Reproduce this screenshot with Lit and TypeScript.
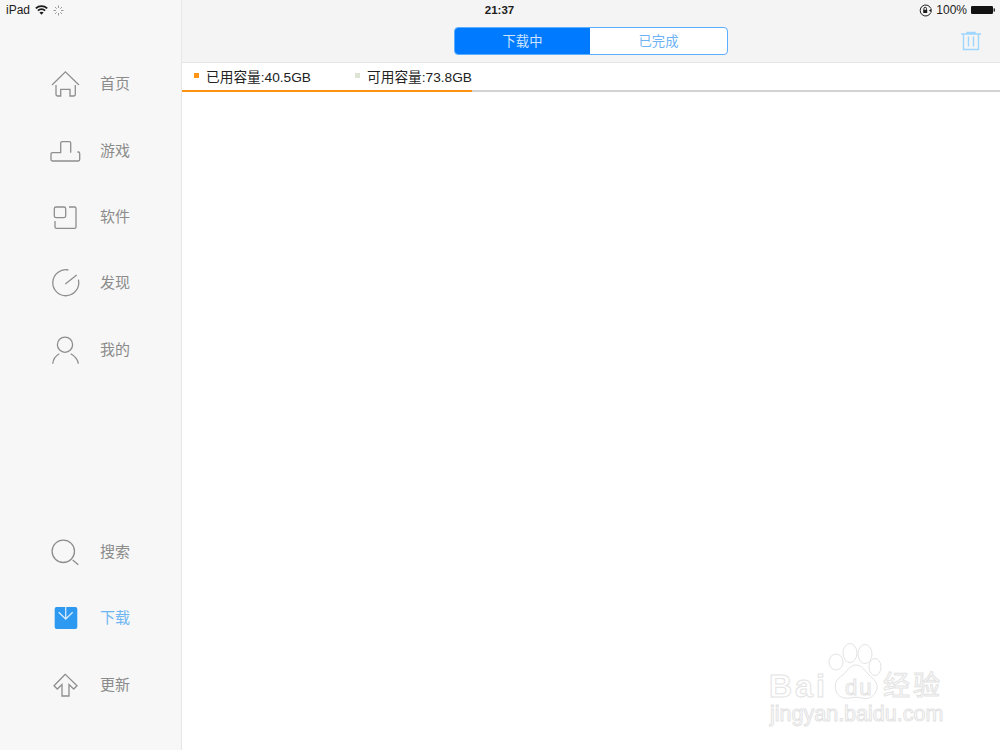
import { LitElement, html, css, svg } from 'lit';
import { customElement, state } from 'lit/decorators.js';

interface NavItem {
  label: string;
  icon: unknown;
  active?: boolean;
}

const homeIcon = svg`<path d="M2 17 15.4 3.8 29 17M6 17V26.6Q6 28 7.4 28H10.7V21.3H20V28H23.9Q25.3 28 25.3 26.6V17"/>`;
const gameIcon = svg`<path d="M20.7 17.7V8.1Q20.7 6.7 19.3 6.7H12.1Q10.7 6.7 10.7 8.1V17.7H2.4Q1 17.7 1 19.1V24.6Q1 26 2.4 26H28.3Q29.7 26 29.7 24.6V18.4Q29.7 17 28.3 17H27.4"/>`;
const appIcon = svg`<rect x="4.3" y="6" width="11.4" height="10.7" rx="1.8"/><path d="M19 6H24.6Q26 6 26 7.4V25.9Q26 27.3 24.6 27.3H6.4Q5 27.3 5 25.9V20"/>`;
const discoverIcon = svg`<path d="M28.4 12.6A13 13 0 1 1 18.4 3M15.3 17 26.7 8"/>`;
const userIcon = svg`<circle cx="15" cy="10.7" r="7.6"/><path d="M2.7 29.7C3.2 25.2 5.7 21.7 9.3 19.7M20.7 19.7C24.3 21.7 27.8 25.2 28.3 29.7"/>`;
const searchIcon = svg`<circle cx="13.3" cy="15.3" r="11.2"/><path d="M22.7 24 28.3 28.7"/>`;
const downloadIcon = svg`<rect class="fill" x="4.7" y="5" width="22.6" height="22" rx="2"/><path class="on-fill" d="M15.7 5V17M8.7 10.3 15.7 17 22.7 10.3"/>`;
const updateIcon = svg`<path d="M15.3 5.3 4 16.7 7.3 20 12 15.5V27H19V15.5L23.7 20 27 16.7Z"/>`;

const topItems: NavItem[] = [
  { label: '首页', icon: homeIcon },
  { label: '游戏', icon: gameIcon },
  { label: '软件', icon: appIcon },
  { label: '发现', icon: discoverIcon },
  { label: '我的', icon: userIcon },
];

const bottomItems: NavItem[] = [
  { label: '搜索', icon: searchIcon },
  { label: '下载', icon: downloadIcon, active: true },
  { label: '更新', icon: updateIcon },
];

@customElement('app-root')
export class AppRoot extends LitElement {
  @state()
  private tab = 0;

  static styles = css`
    :host {
      display: block;
      position: relative;
      width: 1000px;
      height: 750px;
      overflow: hidden;
      background: #fff;
      font-family: 'Liberation Sans', 'Noto Sans CJK SC', sans-serif;
    }

    .layout {
      display: flex;
      height: 100%;
    }

    /* status bar sits over both the sidebar and the header */
    .status {
      position: absolute;
      top: 0;
      left: 0;
      right: 0;
      height: 20px;
      display: grid;
      grid-template-columns: 1fr auto 1fr;
      align-items: center;
      padding: 0 5px 0 6px;
      font-size: 12px;
      color: #1c1c1c;
    }

    .status-left,
    .status-right {
      display: flex;
      align-items: center;
    }

    .status-right {
      justify-content: flex-end;
    }

    .status-left svg {
      margin-left: 5px;
    }

    .time {
      font-size: 11.5px;
      font-weight: bold;
      margin-right: 2px;
    }

    .percent {
      margin: 0 4px;
    }

    .sidebar {
      width: 182px;
      flex: none;
      display: flex;
      flex-direction: column;
      justify-content: space-between;
      padding: 51px 0 32px;
      box-sizing: border-box;
      background: #f7f7f7;
      border-right: 1px solid #e6e6e6;
    }

    .nav-row {
      height: 66.4px;
      display: flex;
      align-items: center;
      padding-left: 50px;
      gap: 18px;
      font-size: 15px;
      color: #8b8b8b;
    }

    .nav-row span {
      margin-bottom: 3px;
    }

    .nav-row.active {
      color: #6fb6f2;
    }

    .nav-row svg {
      width: 32px;
      height: 32px;
      flex: none;
      fill: none;
      stroke: #8e8e8e;
      stroke-width: 1.3;
    }

    .nav-row .fill {
      fill: #2d99f0;
      stroke: none;
    }

    .nav-row .on-fill {
      stroke: #d6ebfc;
    }

    .main {
      flex: 1;
      display: flex;
      flex-direction: column;
    }

    .header {
      height: 63px;
      box-sizing: border-box;
      padding-top: 27px;
      display: grid;
      grid-template-columns: 1fr auto 1fr;
      align-items: start;
      background: #f4f4f4;
      border-bottom: 1px solid #e4e4e4;
    }

    .segments {
      grid-column: 2;
      display: flex;
      width: 274px;
      height: 28px;
      box-sizing: border-box;
      border: 1px solid #5badff;
      border-radius: 4px;
      overflow: hidden;
      font-size: 13.3px;
      background: #fff;
    }

    .segment {
      display: flex;
      align-items: center;
      justify-content: center;
      padding-bottom: 1px;
      color: #6db3f5;
      cursor: pointer;
    }

    .segment:first-child {
      width: 135px;
    }

    .segment:last-child {
      flex: 1;
    }

    .segment.on {
      background: #007aff;
      color: #cfe5ff;
    }

    .trash {
      justify-self: end;
      margin: 4px 18px 0 0;
      width: 22px;
      height: 20px;
      fill: none;
      stroke: #9fd6ff;
      stroke-width: 1.4;
    }

    .legend {
      height: 27px;
      box-sizing: border-box;
      padding: 0 0 2px 12px;
      display: flex;
      align-items: center;
      font-size: 13.7px;
      color: #222;
    }

    .legend-item {
      display: flex;
      align-items: center;
      width: 161px;
    }

    .dot {
      width: 5px;
      height: 5px;
      margin-right: 7px;
    }

    .dot.used {
      background: #ff9412;
    }

    .dot.free {
      background: #dde3d5;
    }

    .capacity {
      height: 2px;
      background: #d2d2d2;
    }

    .capacity div {
      height: 100%;
      background: #ff9412;
    }

    /* stock photo watermark in the corner of the screenshot */
    .watermark {
      position: absolute;
      left: 766px;
      top: 642px;
      width: 182px;
      height: 88px;
      color: #fff;
      -webkit-text-stroke: 1px #e3e3e3;
      pointer-events: none;
    }

    .watermark span {
      position: absolute;
      white-space: nowrap;
      line-height: 1;
    }

    .wm-bai {
      left: 3px;
      top: 28px;
      font-size: 32px;
      font-weight: bold;
      letter-spacing: 3px;
    }

    .wm-du {
      left: 79px;
      top: 35px;
      font-size: 22px;
      letter-spacing: 2px;
    }

    .wm-cn {
      left: 117px;
      top: 31px;
      font-size: 27px;
      letter-spacing: 3px;
    }

    .wm-url {
      left: 4px;
      top: 62px;
      font-size: 21.5px;
    }

    .watermark svg {
      position: absolute;
      left: 58px;
      top: 0;
      width: 66px;
      height: 64px;
      fill: #fff;
      stroke: #e3e3e3;
      stroke-width: 1;
    }
  `;

  private renderNav(item: NavItem) {
    return html`
      <div class="nav-row ${item.active ? 'active' : ''}">
        <svg viewBox="0 0 32 32">${item.icon}</svg>
        <span>${item.label}</span>
      </div>
    `;
  }

  private renderStatus() {
    return html`
      <div class="status">
        <div class="status-left">
          <span>iPad</span>
          <svg width="13" height="10" viewBox="0 0 13 10" fill="none" stroke="#1c1c1c" stroke-width="1.8">
            <path d="M.8 3.4C4 .4 9 .4 12.2 3.4M2.9 5.6C4.9 3.8 8.1 3.8 10.1 5.6"/>
            <path d="M6.5 9.8 4.4 7.5C5.6 6.6 7.4 6.6 8.6 7.5Z" fill="#1c1c1c" stroke="none"/>
          </svg>
          <svg width="11" height="11" viewBox="0 0 11 11" stroke="#9a9a9a" stroke-width="1">
            <path d="M5.5 .5V3M5.5 8V10.5M.5 5.5H3M8 5.5H10.5M2 2 3.7 3.7M7.3 7.3 9 9M2 9 3.7 7.3M7.3 3.7 9 2"/>
          </svg>
        </div>
        <span class="time">21:37</span>
        <div class="status-right">
          <svg width="13" height="13" viewBox="0 0 13 13" fill="none" stroke="#1c1c1c" stroke-width="1">
            <path d="M11.8 4.5A5.5 5.5 0 1 0 11.8 8.5"/>
            <path d="M10 6.5 12.6 4.6V8.4Z" fill="#1c1c1c" stroke="none"/>
            <rect x="4.2" y="5.8" width="4" height="3.2" fill="#1c1c1c" stroke="none"/>
            <path d="M4.9 5.8V4.6A1.3 1.3 0 0 1 7.5 4.6V5.8"/>
          </svg>
          <span class="percent">100%</span>
          <svg width="24" height="8" viewBox="0 0 24 8">
            <rect width="22" height="8" rx="1.2" fill="#111"/>
            <rect x="22.5" y="2.4" width="1.5" height="3.2" fill="#333"/>
          </svg>
        </div>
      </div>
    `;
  }

  render() {
    return html`
      <div class="layout">
        <nav class="sidebar">
          <div>${topItems.map((item) => this.renderNav(item))}</div>
          <div>${bottomItems.map((item) => this.renderNav(item))}</div>
        </nav>
        <main class="main">
          <div class="header">
            <div class="segments">
              ${['下载中', '已完成'].map((label, index) => html`
                <div class="segment ${this.tab === index ? 'on' : ''}" @click="${() => (this.tab = index)}">
                  ${label}
                </div>
              `)}
            </div>
            <svg class="trash" viewBox="0 0 22 20">
              <path d="M1 3H21M7 3V1.5H15V3M3.5 3V18.5H18.5V3M8.5 5.5V15.5M13.5 5.5V15.5"/>
            </svg>
          </div>
          <div class="legend">
            <div class="legend-item"><i class="dot used"></i>已用容量:40.5GB</div>
            <div class="legend-item"><i class="dot free"></i>可用容量:73.8GB</div>
          </div>
          <div class="capacity"><div style="width: ${(40.5 / (40.5 + 73.8)) * 100}%"></div></div>
        </main>
      </div>
      ${this.renderStatus()}
      <div class="watermark">
        <span class="wm-bai">Bai</span>
        <svg viewBox="0 0 66 64">
          <ellipse cx="12" cy="20" rx="7" ry="8"/>
          <ellipse cx="26" cy="11" rx="7" ry="9.5"/>
          <ellipse cx="41" cy="12" rx="7" ry="9.5"/>
          <ellipse cx="51" cy="25" rx="6" ry="8.5"/>
          <path d="M32 23C26 23 23 29 19 33 12 37 10 42 12 49 14 55 20 57 26 56 30 55 34 55 38 56 45 58 51 54 53 47 54 41 50 37 45 33 41 29 38 23 32 23Z"/>
        </svg>
        <span class="wm-du">du</span>
        <span class="wm-cn">经验</span>
        <span class="wm-url">jingyan.baidu.com</span>
      </div>
    `;
  }
}

declare global {
  interface HTMLElementTagNameMap {
    'app-root': AppRoot;
  }
}
